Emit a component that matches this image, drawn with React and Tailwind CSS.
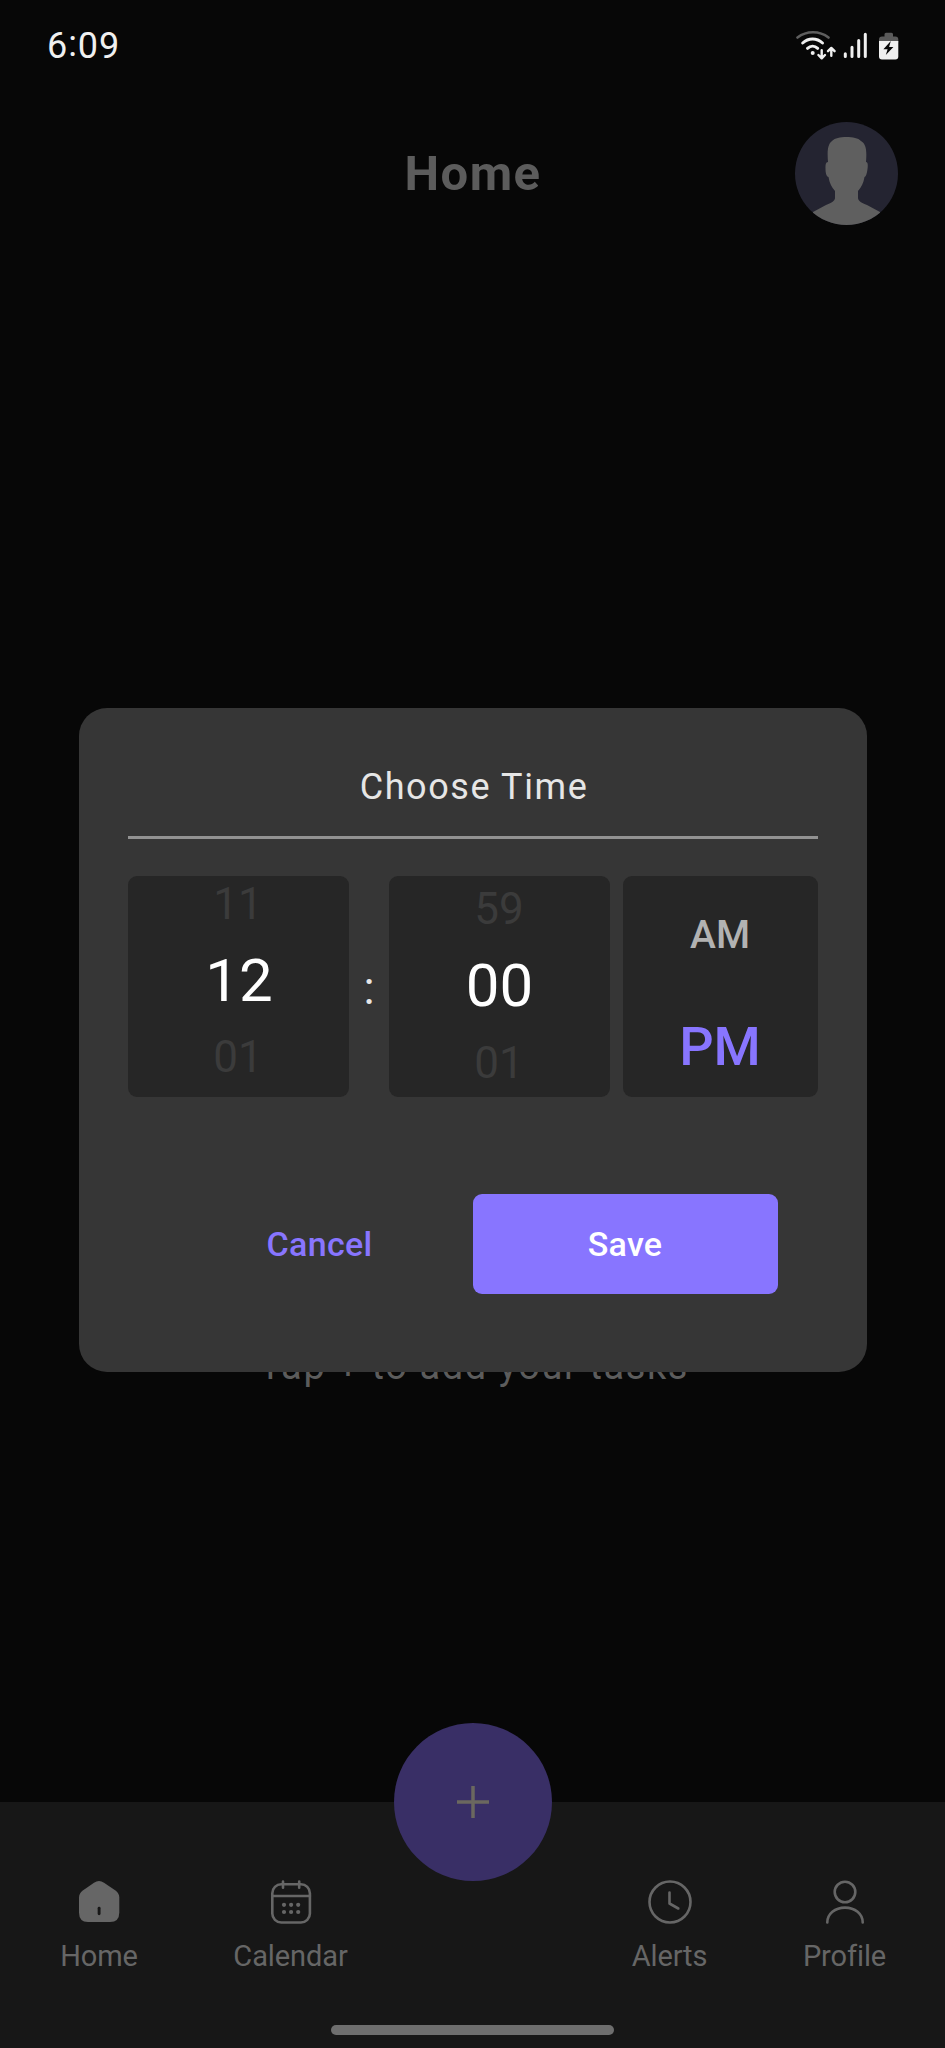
function StatusIcons() {
  return (
    <svg width="104" height="32" viewBox="0 0 104 32" fill="none">
      <path d="M1.500 7.500C10.500 0.500 23.500 0.500 32.500 7.500" stroke="#5e5e5e" strokeWidth="2.600" strokeLinecap="round" />
      <g stroke="#f0f0f0" strokeWidth="3" strokeLinecap="round">
        <path d="M6.700 13C12.500 7.700 20.700 7.700 26.500 13" />
        <path d="M11.500 18.300C14.500 15.500 18.700 15.500 21.700 18.300" />
      </g>
      <circle cx="16.700" cy="23" r="2" fill="#f0f0f0" />
      <g stroke="#f0f0f0" strokeWidth="2.400" strokeLinecap="round" strokeLinejoin="round">
        <path d="M25.700 20.200v7.800M22.400 25l3.300 3.300L29 25" />
        <path d="M35.300 25.800v-7.800M32 21.200l3.300-3.300L38.600 21.200" />
      </g>
      <g stroke="#f0f0f0" strokeWidth="3" strokeLinecap="round">
        <path d="M49.300 23.800v2.700M56 17.200v9.300M62.700 10.500v16M69.300 4.200v22.300" />
      </g>
      <path d="M90 2.700h5.500a1.500 1.500 0 0 1 1.500 1.500V6.500H99.300a3 3 0 0 1 3 3v3H83V9.500a3 3 0 0 1 3-3h2.500V4.200A1.500 1.500 0 0 1 90 2.700z" fill="#5a5a5a" />
      <path d="M83 11h19.300v15.500a3 3 0 0 1-3 3H86a3 3 0 0 1-3-3z" fill="#f0f0f0" />
      <path d="M94.800 11l-7.400 8.200h4.200l-1.800 5.800 7.600-8h-4.300z" fill="#070707" />
    </svg>
  );
}

function Avatar() {
  return (
    <svg width="103" height="103" viewBox="0 0 103 103">
      <defs>
        <clipPath id="avatar">
          <circle cx="51.500" cy="51.500" r="51.500" />
        </clipPath>
      </defs>
      <g clipPath="url(#avatar)">
        <rect width="103" height="103" fill="#242431" />
        <path
          d="M33 40c-1-12 0-18 4-21 3-3 8-4 14.500-4S63 16 66 19c5 3 6 9 5 21 2 0 2 3 1.500 7s-1.500 8-3 8c-1 6-3 10-6.500 14v7c0 3 4 5 9 7l13 7v20H18V90l13-7c5-2 9-4 9-7v-7c-3.500-4-5.500-8-6.500-14-2 0-3-4-3-8s0-7 2.500-7z"
          fill="#5f5f5f"
        />
      </g>
    </svg>
  );
}

function HomeIcon() {
  return (
    <svg width="44" height="44" viewBox="0 0 44 44">
      <path
        d="M17 2.700Q22 -0.500 27 2.700L38.500 10.500Q42.300 13.500 42.300 17.500v15Q42.300 42 33 42h-22Q2 42 2 32.500V17.500Q2 13.500 5.800 10.500z"
        fill="#666"
      />
      <path d="M22.100 28.200v5.600" stroke="#171717" strokeWidth="2.900" strokeLinecap="round" />
    </svg>
  );
}

function CalendarIcon() {
  return (
    <svg width="44" height="44" viewBox="0 0 44 44" fill="none" stroke="#666" strokeWidth="2.600" strokeLinecap="round">
      <rect x="3.300" y="4.300" width="37.600" height="38.200" rx="9" />
      <path d="M3.300 16h37.600M14 1.500v6.300M30.200 1.500v6.300" />
      <g fill="#666" stroke="none">
        <circle cx="15" cy="24.800" r="2.100" />
        <circle cx="22.100" cy="24.800" r="2.100" />
        <circle cx="29.200" cy="24.800" r="2.100" />
        <circle cx="15" cy="32" r="2.100" />
        <circle cx="22.100" cy="32" r="2.100" />
        <circle cx="29.200" cy="32" r="2.100" />
      </g>
    </svg>
  );
}

function ClockIcon() {
  return (
    <svg width="44" height="44" viewBox="0 0 44 44" fill="none" stroke="#666" strokeWidth="2.600" strokeLinecap="round" strokeLinejoin="round">
      <circle cx="22" cy="22" r="20.500" />
      <path d="M21.500 12.500v11l8.800 5" />
    </svg>
  );
}

function ProfileIcon() {
  return (
    <svg width="44" height="44" viewBox="0 0 44 44" fill="none" stroke="#666" strokeWidth="2.600" strokeLinecap="round">
      <circle cx="22" cy="12" r="10.300" />
      <path d="M4.300 42.500C4.300 34 12 27.600 22 27.600S39.700 34 39.700 42.500" />
    </svg>
  );
}

function NavItem({ icon, label, className }) {
  return (
    <button className={"flex flex-col items-center " + className}>
      {icon}
      <span className="mt-[13px] text-[29px] leading-[38px] tracking-[-0.100px] text-[#666]">{label}</span>
    </button>
  );
}

function Wheel({ before, value, after, className = "" }) {
  return (
    <div className={"flex h-[221px] w-[221px] flex-col items-center overflow-hidden rounded-[9px] bg-[#262626] " + className}>
      {before}
      {value}
      {after}
    </div>
  );
}

function Faded({ children }) {
  return <span className="text-[44px] leading-[56px] text-[#3b3b3b]">{children}</span>;
}

function TimeDialog() {
  return (
    <section className="relative z-10 flex h-[664px] w-[788px] flex-col rounded-[28px] bg-[#363636] px-[49px] pt-[54px]">
      <h2 className="box-content h-[74px] border-b-[3px] border-[#929292] pl-[3px] text-center text-[36px] leading-[50px] tracking-[1.600px] text-[#e6e6e6]">
        Choose Time
      </h2>
      <div className="mt-[37px] flex">
        <Wheel
          before={<Faded>11</Faded>}
          value={<span className="pl-[2px] text-[60px] leading-[97px] text-white">12</span>}
          after={<Faded>01</Faded>}
        />
        <span className="w-[40px] pt-[84px] pl-[1px] text-center text-[46px] leading-[56px] text-[#e6e6e6]">:</span>
        <Wheel
          before={<Faded>59</Faded>}
          value={<span className="pl-[1px] text-[60px] leading-[98px] text-white">00</span>}
          after={<Faded>01</Faded>}
          className="pt-[5px]"
        />
        <div className="ml-[13px] flex h-[221px] w-[195px] flex-col items-center rounded-[9px] bg-[#262626] pt-[34px] font-medium">
          <span className="text-[39px] leading-[50px] text-[#b2b2b2]">AM</span>
          <span className="mt-[51px] text-[54px] leading-[72px] text-[#8875ff]">PM</span>
        </div>
      </div>
      <div className="mt-[97px] flex pl-[39px] text-[34px] font-medium tracking-[0.300px]">
        <button className="h-[100px] w-[306px] text-[#8875ff]">Cancel</button>
        <button className="h-[100px] w-[305px] rounded-[9px] bg-[#8875ff] text-white">Save</button>
      </div>
    </section>
  );
}

export default function App() {
  return (
    <div className="flex h-[2048px] w-[945px] flex-col overflow-hidden bg-[#070707] font-['Roboto',sans-serif]">
      <div className="flex h-[92px] items-center justify-between pl-[47px] pr-[45px]">
        <span className="pt-[1px] text-[36px] leading-[91px] tracking-[0.900px] text-[#f0f0f0]">
          6<span className="relative -top-[2px]">:</span>09
        </span>
        <StatusIcons />
      </div>
      <header className="grid h-[162px] grid-cols-[1fr_auto_1fr] items-center px-[47px]">
        <span />
        <h1 className="pl-[1px] pt-[1px] text-[49px] font-bold leading-[60px] tracking-[1.500px] text-[#5c5c5c]">Home</h1>
        <div className="flex justify-end">
          <Avatar />
        </div>
      </header>
      <main className="flex h-[1548px] flex-col items-center pt-[454px]">
        <TimeDialog />
        <p className="-mt-[34px] pl-[3px] text-[38px] leading-[56px] tracking-[1.600px] text-[#5c5c5c]">Tap + to add your tasks</p>
      </main>
      <nav className="relative flex h-[246px] bg-[#171717] pt-[78px]">
        <NavItem icon={<HomeIcon />} label="Home" className="ml-[39px] w-[120px]" />
        <NavItem icon={<CalendarIcon />} label="Calendar" className="ml-[61px] w-[141px]" />
        <NavItem icon={<ClockIcon />} label="Alerts" className="ml-[248px] w-[121px]" />
        <NavItem icon={<ProfileIcon />} label="Profile" className="ml-[54px] w-[121px]" />
        <button className="absolute -top-[79px] left-[394px] flex h-[158px] w-[158px] items-center justify-center rounded-full bg-[#392f66]">
          <svg width="34" height="34" viewBox="0 0 34 34" stroke="#6b685f" strokeWidth="3.500">
            <path d="M1 17h32M17 1v32" />
          </svg>
        </button>
        <div className="absolute bottom-[13px] left-[331px] h-[10px] w-[283px] rounded-full bg-[#6e6e6e]" />
      </nav>
    </div>
  );
}
